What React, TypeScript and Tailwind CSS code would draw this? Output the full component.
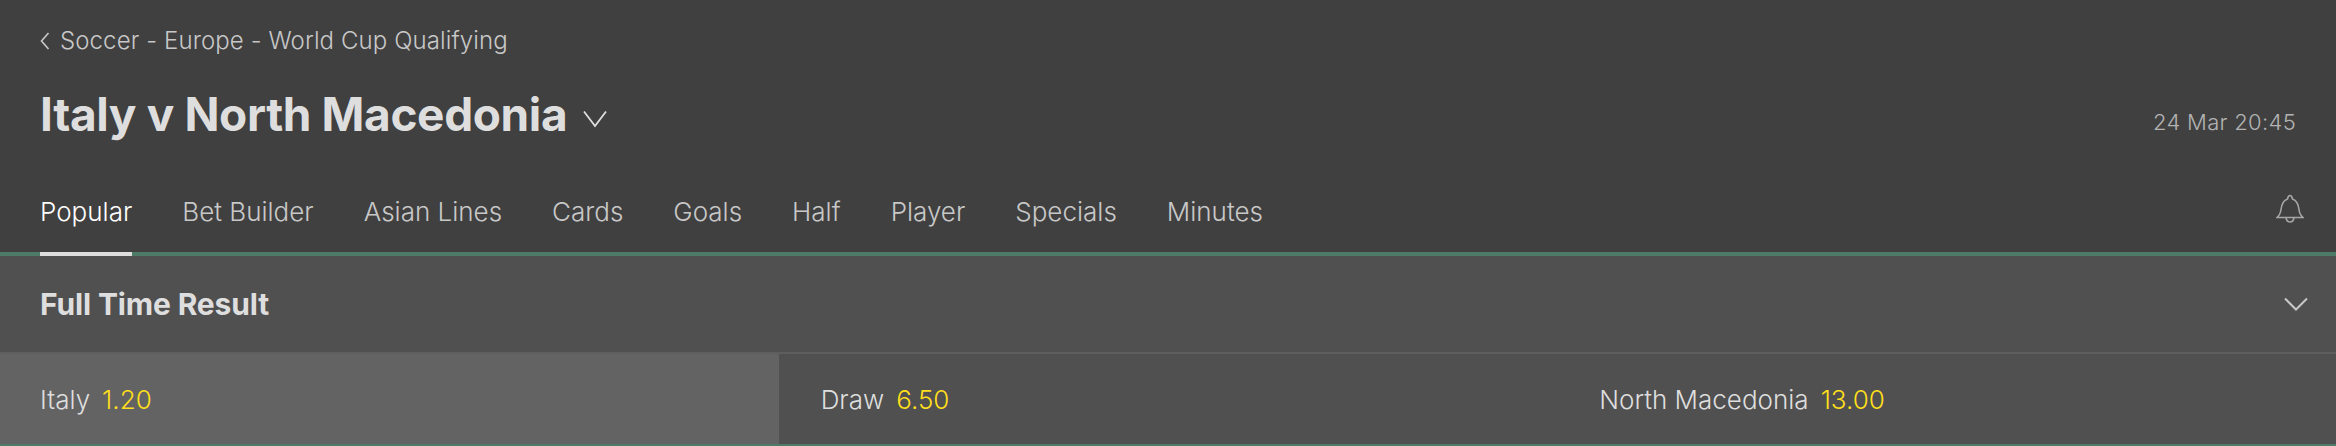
import React from 'react';

const tabs = ['Popular', 'Bet Builder', 'Asian Lines', 'Cards', 'Goals', 'Half', 'Player', 'Specials', 'Minutes'];

const Outcome: React.FC<{ name: string; odds: string; active?: boolean }> = ({ name, odds, active }) => (
  <div className={`flex items-center gap-3 pl-[42px] first:pl-10 text-[26px] ${active ? 'bg-[#636363]' : ''}`}>
    <span className="text-[#dedede] font-light">{name}</span>
    <span className="text-[#ffdf1b] font-light">{odds}</span>
  </div>
);

export default function App() {
  return (
    <div className="h-[446px] bg-[#505050] flex flex-col overflow-hidden font-['Inter',sans-serif]">
      {/* Header */}
      <div className="h-[252px] bg-[#404040] flex flex-col">
        <div className="h-[80px] flex items-center pl-10 pt-[2px] gap-[10px] text-[#c8c8c8] text-[24px] font-light tracking-[0.1px]">
          <svg viewBox="0 0 10 18" fill="none" stroke="currentColor" strokeWidth="1.6" className="w-[10px] h-[18px]">
            <path d="M8.5 1 1.5 9 8.5 17" />
          </svg>
          <span>Soccer - Europe - World Cup Qualifying</span>
        </div>
        <div className="h-[68px] flex items-center pl-10 pr-10 text-[#dedede]">
          <span className="text-[46px] font-bold tracking-[-0.37px]">Italy v North Macedonia</span>
          <svg viewBox="0 0 24 18" fill="none" stroke="currentColor" strokeWidth="1.8" className="w-[24px] h-[18px] ml-4 mt-[9px]">
            <path d="M1 1.5 12 16 23 1.5" />
          </svg>
          <span className="ml-auto text-[22px] text-[#b3b3b3] font-light tracking-[0.3px] mt-4">24 Mar 20:45</span>
        </div>
        <div className="flex-1 flex items-end pl-10 pr-[32px] relative">
          <div className="flex gap-[50px] text-[26px] font-light text-[#c8c8c8]">
            {tabs.map((tab, i) => (
              <div key={tab} className={`relative pb-[21px] ${i === 0 ? 'text-white' : ''}`}>
                {tab}
                {i === 0 && <div className="absolute left-0 right-0 bottom-[-4px] h-1 bg-[#dedede]" />}
              </div>
            ))}
          </div>
          <svg viewBox="0 0 28 30" fill="none" stroke="#a6a6a6" strokeWidth="1.6" className="ml-auto w-[28px] h-[30px] mb-[28px]">
            <path d="M1 23.5h26c-2.5-2-3.500-4-4-8-.6-5-2-9-6.500-10.500C16 2.500 15 1.500 14 1.500S12 2.500 11.500 5C7 6.500 5.600 10.500 5 15.500c-.5 4-1.500 6-4 8Z" />
            <path d="M10 24c.5 2.500 2 4 4 4s3.500-1.500 4-4" />
          </svg>
        </div>
      </div>
      <div className="h-1 bg-[#4d7b67]" />

      {/* Market */}
      <div className="h-[96px] flex items-center justify-between pl-10 pr-[28px] text-[#dedede]">
        <span className="text-[30px] font-bold tracking-[-0.15px] mt-[1px]">Full Time Result</span>
        <svg viewBox="0 0 24 14" fill="none" stroke="currentColor" strokeWidth="2" className="w-[24px] h-[14px] text-[#c8c8c8]">
          <path d="M1 1.500 12 12.500 23 1.500" />
        </svg>
      </div>
      <div className="h-[2px] bg-[#5e5e5e]" />
      <div className="flex-1 grid grid-cols-3">
        <Outcome name="Italy" odds="1.20" active />
        <Outcome name="Draw" odds="6.50" />
        <Outcome name="North Macedonia" odds="13.00" />
      </div>
      <div className="h-[2px] bg-[#4d7b67]" />
    </div>
  );
}
